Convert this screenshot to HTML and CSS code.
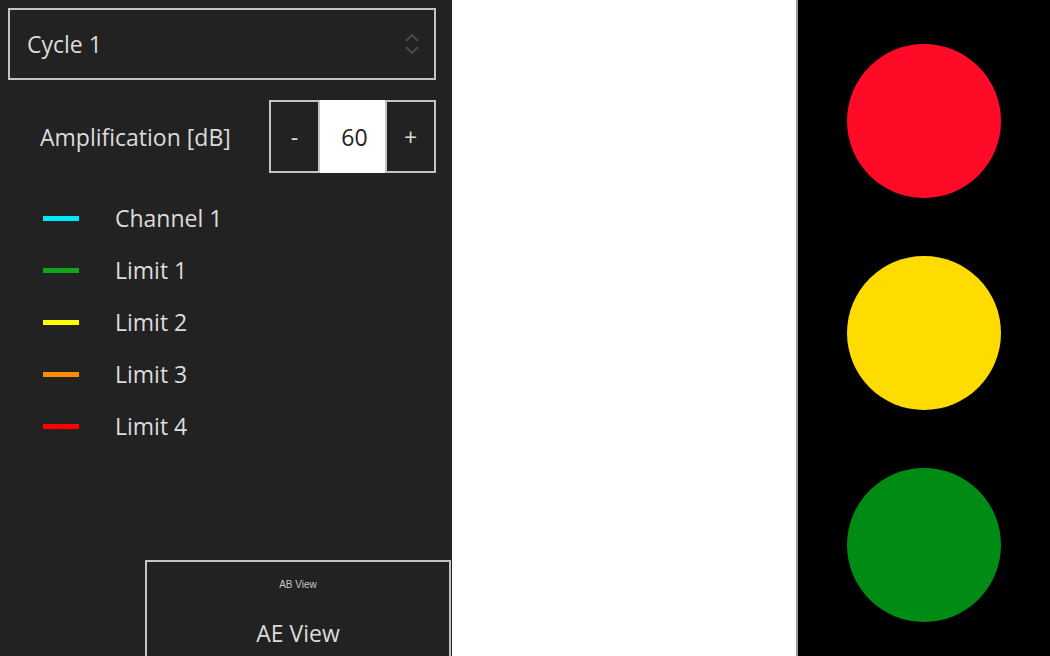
FILE: index.html
```
<!DOCTYPE html>
<html lang="en">
<head>
    <meta charset="UTF-8">
    <meta name="viewport" content="width=device-width, initial-scale=1.0">
    <title>AE View</title>
    <link rel="stylesheet" href="styles.css">
</head>
<body>
    <div class="page">
        <div class="panel">
            <div class="cycle-select">
                <span>Cycle 1</span>
                <svg class="spin" width="16" height="24" viewBox="0 0 16 24">
                    <path d="M2 9 L8 3 L14 9" fill="none" stroke="#484848" stroke-width="2"/>
                    <path d="M2 15 L8 21 L14 15" fill="none" stroke="#484848" stroke-width="2"/>
                </svg>
            </div>

            <div class="amp-row">
                <span class="amp-label">Amplification [dB]</span>
                <div class="stepper">
                    <button class="step-btn">-</button>
                    <div class="step-value">60</div>
                    <button class="step-btn">+</button>
                </div>
            </div>

            <ul class="legend">
                <li><span class="swatch cyan"></span>Channel 1</li>
                <li><span class="swatch green"></span>Limit 1</li>
                <li><span class="swatch yellow"></span>Limit 2</li>
                <li><span class="swatch orange"></span>Limit 3</li>
                <li><span class="swatch red"></span>Limit 4</li>
            </ul>

            <div class="view-btn">
                <span class="view-small">AB View</span>
                <span class="view-big">AE View</span>
            </div>
        </div>

        <div class="spacer"></div>

        <div class="traffic">
            <div class="lamp lamp-red"></div>
            <div class="lamp lamp-yellow"></div>
            <div class="lamp lamp-green"></div>
        </div>
    </div>
</body>
</html>
```

FILE: styles.css
```
body {
    margin: 0;
    font-family: "Open Sans", "DejaVu Sans", sans-serif;
    background-color: #ffffff;
    overflow: hidden;
}

.page {
    display: flex;
    height: 656px;
}

.panel {
    width: 452px;
    height: 656px;
    background-color: #222222;
    color: #dcdcdc;
    display: flex;
    flex-direction: column;
    padding: 8px 16px 0 8px;
    box-sizing: border-box;
}

.cycle-select {
    height: 72px;
    border: 2px solid #c4c4c4;
    box-sizing: border-box;
    display: flex;
    align-items: center;
    justify-content: space-between;
    padding: 0 14px 0 17px;
    font-size: 23px;
}

.amp-row {
    margin-top: 20px;
    height: 73px;
    display: flex;
    align-items: center;
    justify-content: space-between;
    padding-left: 32px;
}

.amp-label {
    font-size: 23px;
}

.stepper {
    display: flex;
    height: 73px;
}

.step-btn {
    width: 51px;
    height: 73px;
    background-color: #222222;
    border: 2px solid #c4c4c4;
    color: #dcdcdc;
    font-family: inherit;
    font-size: 23px;
    padding: 0;
}

.step-value {
    width: 65px;
    background-color: #ffffff;
    color: #222222;
    font-size: 23px;
    display: flex;
    align-items: center;
    justify-content: center;
    padding-left: 4px;
    box-sizing: border-box;
}

.legend {
    list-style: none;
    margin: 19px 0 0 0;
    padding: 0;
}

.legend li {
    height: 52px;
    display: flex;
    align-items: center;
    font-size: 23px;
    padding-left: 35px;
}

.swatch {
    width: 36px;
    height: 5px;
    margin-right: 36px;
}

.cyan { background-color: #00e8ff; }
.green { background-color: #12a51a; }
.yellow { background-color: #ffff00; }
.orange { background-color: #ff8c00; }
.red { background-color: #ff0000; }

.view-btn {
    margin-top: auto;
    margin-left: 137px;
    margin-right: -15px;
    height: 96px;
    border: 2px solid #c4c4c4;
    border-bottom: none;
    box-sizing: border-box;
    display: flex;
    flex-direction: column;
    align-items: center;
}

.view-small {
    font-family: "Liberation Sans", Arial, sans-serif;
    font-size: 10px;
    margin-top: 17px;
    color: #c8c8c8;
}

.view-big {
    font-family: "Open Sans", sans-serif;
    font-size: 23px;
    margin-top: 27px;
}

.spacer {
    width: 344px;
}

.traffic {
    width: 254px;
    background-color: #000000;
    border-left: 2px solid #9a9a9a;
    box-sizing: border-box;
    display: flex;
    flex-direction: column;
    align-items: center;
    padding-top: 44px;
    gap: 58px;
}

.lamp {
    width: 154px;
    height: 154px;
    border-radius: 50%;
    flex-shrink: 0;
}

.lamp-red { background-color: #ff0b28; }
.lamp-yellow { background-color: #ffdc00; }
.lamp-green { background-color: #008c14; }
```
